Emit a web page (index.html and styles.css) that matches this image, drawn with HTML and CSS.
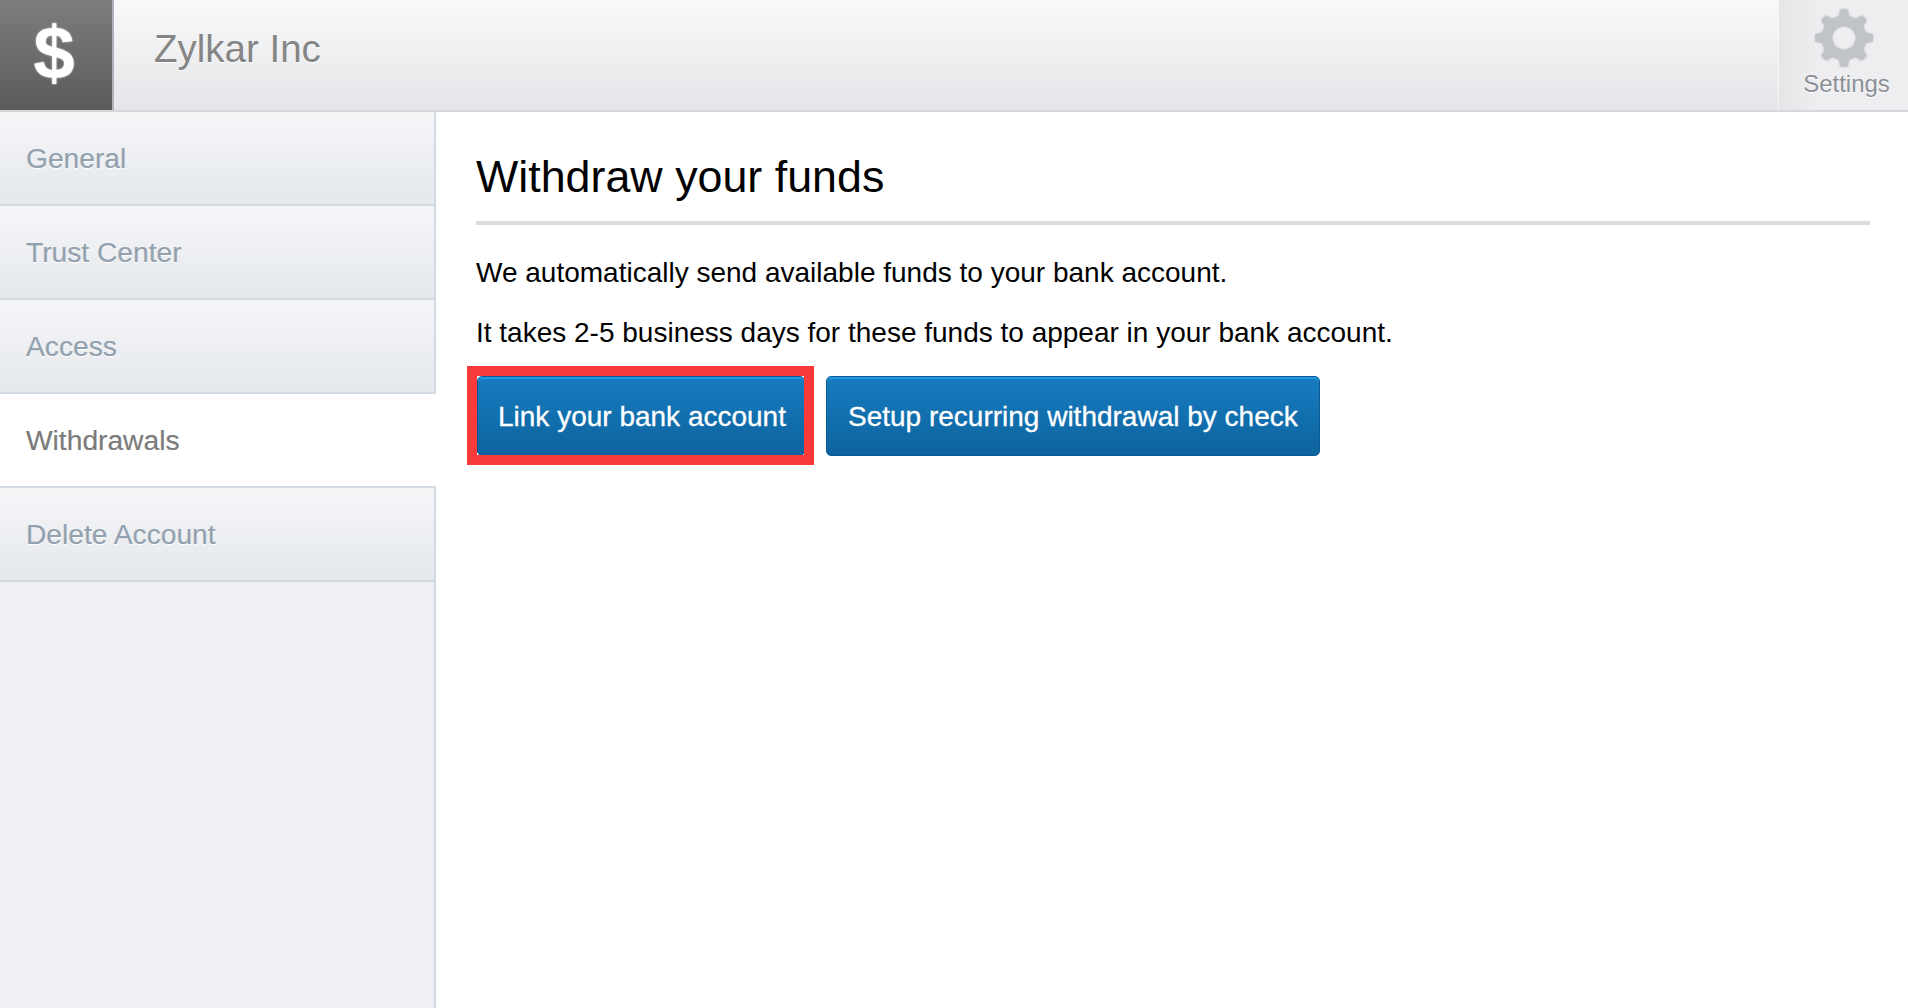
FILE: index.html
```html
<!DOCTYPE html>
<html lang="en">
<head>
    <meta charset="UTF-8">
    <meta name="viewport" content="width=device-width, initial-scale=1.0">
    <title>Withdrawals</title>
    <link rel="stylesheet" href="styles.css">
</head>
<body>

    <header class="top-bar">
        <div class="logo">$</div>
        <div class="org-name">Zylkar Inc</div>
        <div class="settings">
            <svg class="gear" width="64" height="62" viewBox="-32 -31 64 62">
                <g class="gear-teeth">
                    <polygon id="tooth" points="-5,-21 -3.4,-28.5 3.4,-28.5 5,-21"></polygon>
                    <use href="#tooth" transform="rotate(45)"></use>
                    <use href="#tooth" transform="rotate(90)"></use>
                    <use href="#tooth" transform="rotate(135)"></use>
                    <use href="#tooth" transform="rotate(180)"></use>
                    <use href="#tooth" transform="rotate(225)"></use>
                    <use href="#tooth" transform="rotate(270)"></use>
                    <use href="#tooth" transform="rotate(315)"></use>
                </g>
                <circle class="gear-ring" r="17"></circle>
            </svg>
            <span>Settings</span>
        </div>
    </header>

    <div class="page">
        <nav class="sidebar">
            <a class="nav-item">General</a>
            <a class="nav-item">Trust Center</a>
            <a class="nav-item">Access</a>
            <a class="nav-item active">Withdrawals</a>
            <a class="nav-item">Delete Account</a>
        </nav>

        <main class="content">
            <h1>Withdraw your funds</h1>
            <p>We automatically send available funds to your bank account.</p>
            <p>It takes 2-5 business days for these funds to appear in your bank account.</p>
            <div class="buttons">
                <div class="highlighted">
                    <button class="btn btn-link">Link your bank account</button>
                    <div class="red-box"></div>
                </div>
                <button class="btn btn-check">Setup recurring withdrawal by check</button>
            </div>
        </main>
    </div>

</body>
</html>
```

FILE: styles.css
```css
html, body {
    height: 100%;
}

body {
    font-family: 'Liberation Sans', Arial, sans-serif;
    margin: 0;
    background-color: #ffffff;
    overflow: hidden;
}

/* Top bar */
.top-bar {
    display: flex;
    height: 110px;
    background: linear-gradient(#f8f9f9, #e6e6ea);
    border-bottom: 2px solid #d6d6dc;
}

.logo {
    width: 108px;
    padding-right: 4px;
    background: linear-gradient(#7d7d7d, #5b5b5b);
    border-right: 2px solid #b1b1bb;
    color: #ffffff;
    font-size: 74px;
    font-weight: bold;
    line-height: 106px;
    text-align: center;
    text-shadow: 0 0 2px #ffffff;
}

.org-name {
    flex: 1;
    padding-left: 40px;
    font-size: 38.5px;
    line-height: 97px;
    color: #858585;
    text-shadow: 0 1px 0 #ffffff;
}

.settings {
    width: 130px;
    display: flex;
    flex-direction: column;
    align-items: center;
    background: linear-gradient(90deg, #e6e6e9, #eeeef0 30%, #eeeef0);
    border-left: 1px solid #f6f6f7;
    box-sizing: border-box;
    color: #8b9097;
    font-size: 24px;
    text-shadow: 0 1px 0 #ffffff;
}

.gear {
    margin-top: 7px;
    filter: drop-shadow(0 0 1px #a3a7ad);
}

.gear-teeth {
    fill: #c0c4c9;
}

.gear-ring {
    fill: none;
    stroke: #c0c4c9;
    stroke-width: 10;
}

.settings span {
    margin-top: 2px;
    margin-left: 6px;
    line-height: 26px;
}

/* Layout */
.page {
    display: flex;
    height: calc(100% - 112px);
}

.sidebar {
    width: 434px;
    background-color: #eff0f4;
    border-right: 2px solid #d3d9e2;
    flex-shrink: 0;
}

.nav-item {
    display: block;
    height: 92px;
    padding-left: 26px;
    font-size: 28.2px;
    line-height: 93px;
    color: #93a1ae;
    background: linear-gradient(#f5f6f8, #e5e8ec);
    border-bottom: 2px solid #d3dae2;
    text-shadow: 0 1px 0 #ffffff;
    -webkit-text-stroke: 0.2px;
}

.nav-item.active {
    width: 410px;
    background: #ffffff;
    color: #7b7b7b;
    margin-right: -2px;
    position: relative;
}

.content {
    flex: 1;
    padding: 0 38px 0 40px;
}

h1 {
    margin: 0 0 31px;
    height: 109px;
    font-size: 44.8px;
    font-weight: normal;
    line-height: 128px;
    color: #000000;
    border-bottom: 4px solid #dcdcdc;
}

p {
    margin: 0 0 26px;
    font-size: 28px;
    line-height: 34px;
    color: #000000;
}

/* Buttons */
.buttons {
    display: flex;
    gap: 21px;
    margin-left: 1px;
}

.highlighted {
    position: relative;
}

.btn {
    display: block;
    height: 80px;
    padding: 2px 20px 0;
    font-family: 'Liberation Sans', Arial, sans-serif;
    font-size: 28px;
    color: #ffffff;
    background: linear-gradient(#177cc0, #0d639e);
    border: 1px solid #0b5a92;
    border-radius: 5px;
    box-shadow: inset 0 2px 0 #2197e2;
    -webkit-text-stroke: 0.3px;
    cursor: pointer;
}

.btn-link {
    padding-right: 18px;
}

.btn-check {
    padding-left: 21px;
    padding-right: 21px;
}

.red-box {
    position: absolute;
    top: -10px;
    left: -10px;
    right: -9px;
    bottom: -9px;
    border: 10px solid #f93a3a;
}
```
